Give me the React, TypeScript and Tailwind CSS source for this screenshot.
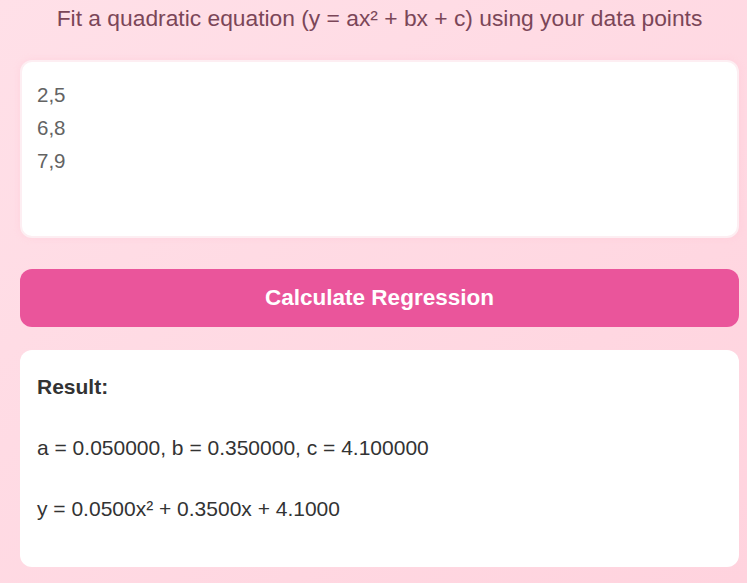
const points = `2,5
6,8
7,9`;

export default function App() {
  return (
    <div className="min-h-[583px] w-full bg-gradient-to-br from-[#ffe0e8] to-[#ffd3de] font-['Liberation_Sans',Arial,sans-serif]">
      <div className="ml-[20px] mr-[8px] flex flex-col">
        <p className="pt-[4px] text-center text-[22.8px] leading-[28px] text-[#7b4658]">
          Fit a quadratic equation (y = ax² + bx + c) using your data points
        </p>

        <textarea
          defaultValue={points}
          className="mt-[28px] h-[178px] resize-none rounded-[12px] border-2 border-[#fdeef2] bg-white px-[15px] pt-[16px] text-[20.5px] leading-[33px] text-[#636363] shadow-[0_0_6px_rgba(255,192,208,0.35)] outline-none"
        />

        <button className="mt-[31px] h-[58px] rounded-[12px] bg-[#ea559b] text-[22.5px] font-bold text-white">
          Calculate Regression
        </button>

        <div className="mt-[23px] h-[217px] rounded-[12px] bg-white px-[17px] pt-[25px] text-[21px] text-[#333]">
          <p className="font-bold leading-[24px]">Result:</p>
          <p className="mt-[37px] leading-[24px]">a = 0.050000, b = 0.350000, c = 4.100000</p>
          <p className="mt-[37px] leading-[24px]">y = 0.0500x² + 0.3500x + 4.1000</p>
        </div>
      </div>
    </div>
  );
}
